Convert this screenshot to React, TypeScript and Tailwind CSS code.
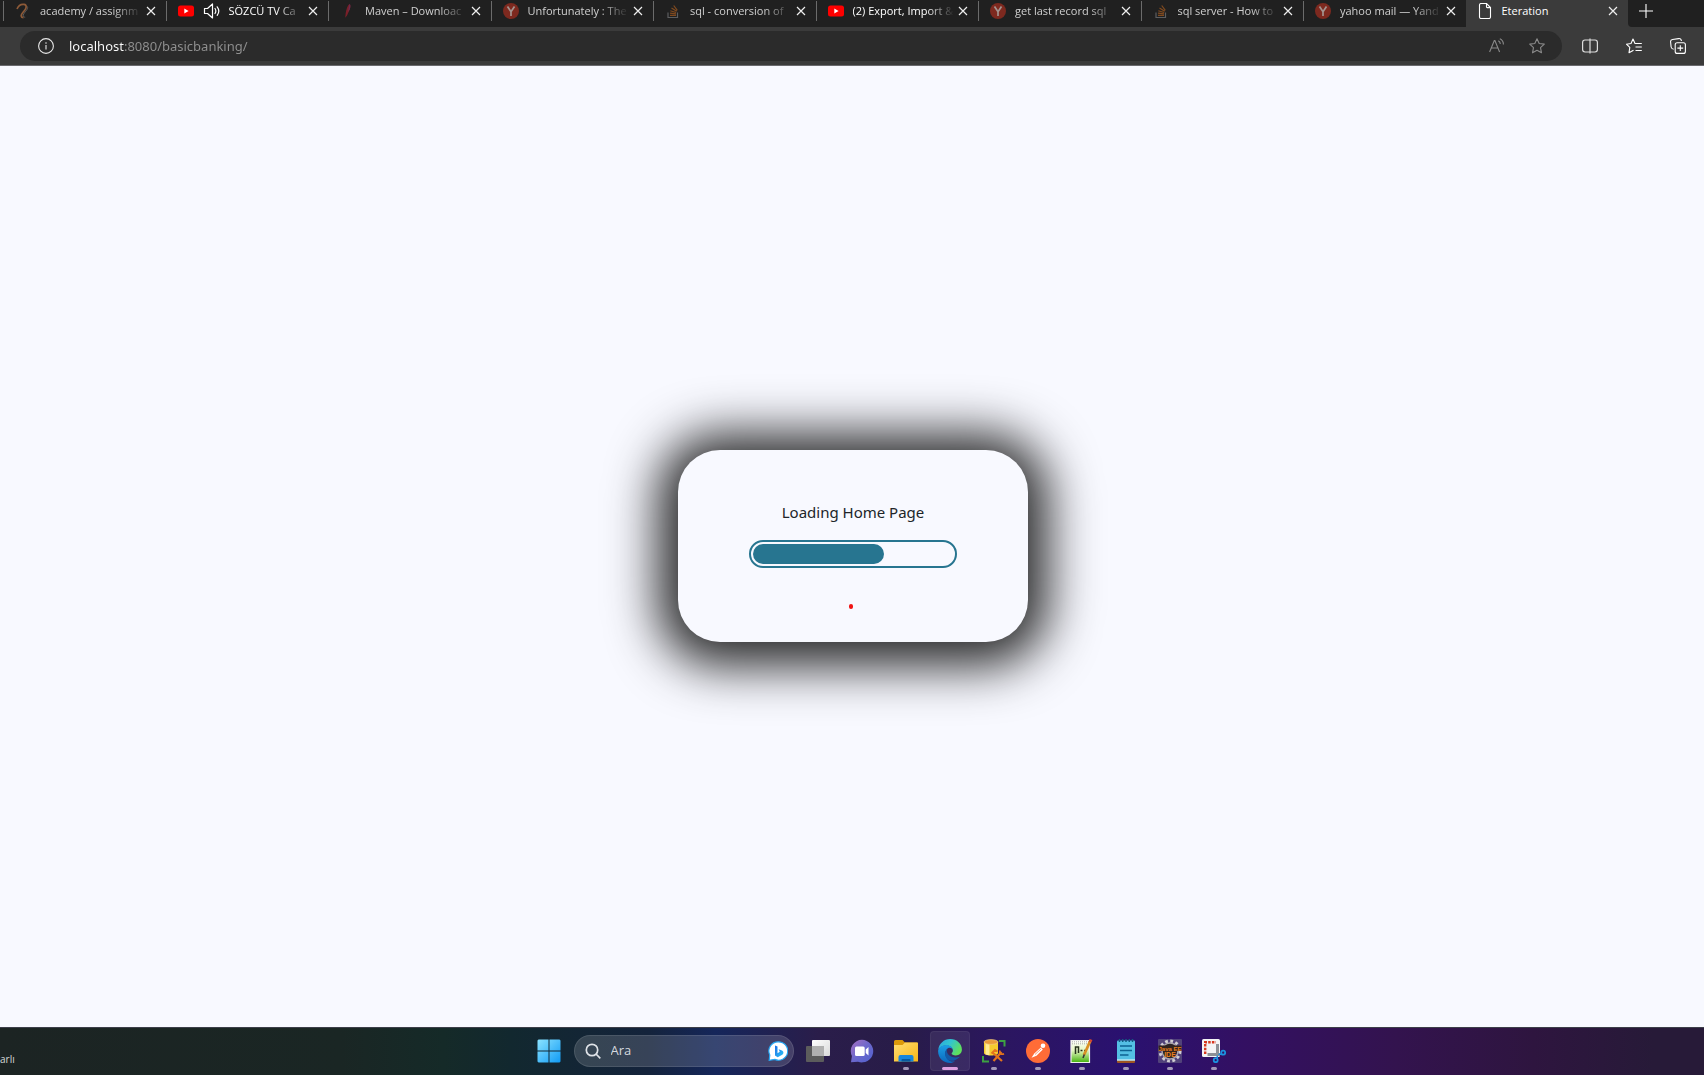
import React from 'react';

const UI = "font-['Open_Sans','Noto_Sans',sans-serif]";

/* ---------- tab favicons ---------- */

function AcademyIcon() {
  return (
    <svg viewBox="0 0 16 16" className="size-4 shrink-0" fill="none">
      <path d="M2 6C3.500 2.500 6.500 1 9 1.400c3 .5 2.700 3.600.5 6.100-1.800 2-3.500 3.800-3.300 5.500.2 1.200 1.200 1.700 2.300 1.700" stroke="#8d5a38" strokeWidth="1.700" />
      <path d="M12.500 3.500c1 3-3.200 5.500-4.300 8.500-.3 1.300.5 2.200 2 2.200" stroke="#5e5c5b" strokeWidth="1" />
    </svg>
  );
}

function YouTubeIcon() {
  return (
    <svg viewBox="0 0 16 16" className="size-4 shrink-0">
      <rect x="0" y="2.500" width="16" height="11" rx="2.500" fill="#f00" />
      <path d="M6.300 5.600v4.800L10.600 8z" fill="#fff" />
    </svg>
  );
}

function MavenIcon() {
  return (
    <svg viewBox="0 0 16 16" className="size-4 shrink-0">
      <path d="M9.500 1c1.300.8 1 3.200.2 5.500L7 12.500 5.200 14.800 5.600 11C6.200 6.500 7.300 2.500 9.500 1z" fill="#7a1f28" />
      <path d="M9.500 1c1.300.8 1 3.200.2 5.500L8 9z" fill="#6b2d52" />
    </svg>
  );
}

function YandexIcon() {
  return (
    <svg viewBox="0 0 16 16" className="size-4 shrink-0" fill="none">
      <circle cx="8" cy="8" r="8" fill="#7d291f" />
      <path d="M4.500 3.500 8 8.800l3.500-5.300M8 8.500V13" stroke="#a3938f" strokeWidth="1.700" />
    </svg>
  );
}

function StackIcon() {
  return (
    <svg viewBox="0 0 16 16" className="size-4 shrink-0" fill="none">
      <path d="M3 9.500v5h9.500v-5" stroke="#5d5e60" strokeWidth="1.200" />
      <path d="M5 12.300h6M5 10.200l6 .7M5.300 7.700l5.800 1.800M6.500 5l5.200 3.200M8.700 2.500l3.600 4.800" stroke="#804a1f" strokeWidth="1.200" />
    </svg>
  );
}

function PageIcon() {
  return (
    <svg viewBox="0 0 16 16" className="size-4 shrink-0" fill="none" stroke="#fff" strokeWidth="1.100">
      <path d="M2.500 2C2.500 1 3 .5 4 .5h5.500l4 4V14c0 1-.5 1.500-1.500 1.500H4c-1 0-1.500-.5-1.500-1.500z" />
      <path d="M9.500.5V4c0 .4.200.600.6.600h3.400" />
    </svg>
  );
}

function SpeakerIcon() {
  return (
    <svg viewBox="0 0 18 16" className="h-4 w-[18px] shrink-0" fill="none" stroke="#fff" strokeWidth="1.200" strokeLinejoin="round">
      <path d="M1.500 5.500h3L9.500 1v14l-5-4.500h-3z" />
      <path d="M12 5.500c1 1.500 1 3.500 0 5M14.200 3.800c1.900 2.500 1.900 6 0 8.500" strokeLinecap="round" />
    </svg>
  );
}

function CloseIcon() {
  return (
    <svg viewBox="0 0 10 10" className="size-[10px]" stroke="#eee" strokeWidth="1.200" fill="none">
      <path d="M1 1l8 8M9 1L1 9" />
    </svg>
  );
}

type TabInfo = { title: string; icon: React.ReactNode; sound?: boolean; bright?: boolean };

const tabs: TabInfo[] = [
  { title: 'academy / assignm', icon: <AcademyIcon /> },
  { title: 'SÖZCÜ TV Ca', icon: <YouTubeIcon />, sound: true, bright: true },
  { title: 'Maven – Downloac', icon: <MavenIcon /> },
  { title: 'Unfortunately : The', icon: <YandexIcon /> },
  { title: 'sql - conversion of', icon: <StackIcon /> },
  { title: '(2) Export, Import &', icon: <YouTubeIcon />, bright: true },
  { title: 'get last record sql', icon: <YandexIcon /> },
  { title: 'sql server - How to', icon: <StackIcon /> },
  { title: 'yahoo mail — Yand', icon: <YandexIcon /> },
];

function Tab({ title, icon, sound, bright }: TabInfo) {
  return (
    <div className="flex min-w-0 flex-1 items-center">
      <span className="h-5 w-px shrink-0 bg-[#6b6b6b]" />
      <div className="flex min-w-0 flex-1 items-center pl-[11px] pr-2">
        {icon}
        {sound && <span className="ml-[9px] flex"><SpeakerIcon /></span>}
        <span
          className={
            'min-w-0 flex-1 overflow-hidden whitespace-nowrap [mask-image:linear-gradient(to_left,transparent,black_28px)] ' +
            (sound ? 'ml-2 ' : 'ml-[9px] ') +
            (bright ? 'text-white' : 'text-[#d0d0d0]')
          }
        >
          {title}
        </span>
        <button aria-label={'Close ' + title} className="ml-[2px] flex size-[14px] shrink-0 items-center justify-center">
          <CloseIcon />
        </button>
      </div>
    </div>
  );
}

function TabStrip() {
  return (
    <div className="flex h-[27px] bg-[#202020] pl-[3px] text-[11px] leading-4">
      <div className="flex min-w-0 flex-[9] pb-[5px]">
        {tabs.map((t) => (
          <Tab key={t.title} {...t} />
        ))}
      </div>
      <div className="flex min-w-0 flex-1 bg-[#3b3b3b]">
        <span className="w-1 shrink-0 self-stretch rounded-br bg-[#202020] -ml-1" />
        <div className="flex min-w-0 flex-1 items-center pb-[5px] pl-[11px] pr-2">
          <PageIcon />
          <span className="ml-[9px] flex-1 text-white">Eteration</span>
          <button aria-label="Close Eteration" className="flex size-[14px] shrink-0 items-center justify-center">
            <CloseIcon />
          </button>
        </div>
      </div>
      <div className="flex w-[76px] shrink-0 bg-[#3b3b3b]">
        <div className="flex flex-1 items-center rounded-bl bg-[#202020] pb-[5px] pl-[11px]">
          <button aria-label="New tab">
            <svg viewBox="0 0 14 14" className="size-[14px]" stroke="#fff" strokeWidth="1.100">
              <path d="M7 0v14M0 7h14" />
            </svg>
          </button>
        </div>
      </div>
    </div>
  );
}

function Toolbar() {
  return (
    <div className="flex h-[39px] items-center border-b border-[#6a6a6e] bg-[#3b3b3b] pl-5 pr-[18px]">
      <div className="flex h-[30px] min-w-0 flex-1 items-center rounded-full bg-[#2b2b2b] pl-[18px] pr-[17px]">
        <button aria-label="Site information">
          <svg viewBox="0 0 16 16" className="size-4" fill="none" stroke="#e8e8e8" strokeWidth="1.100">
            <circle cx="8" cy="8" r="7.400" />
            <path d="M8 7v4.500M8 4.300v1.400" />
          </svg>
        </button>
        <input
          aria-label="Address"
          defaultValue="localhost:8080/basicbanking/"
          className="ml-[15px] min-w-0 flex-1 bg-[linear-gradient(to_right,#fff_56px,#919191_56px)] bg-clip-text font-['Noto_Sans',sans-serif] text-[13px] leading-5 text-transparent outline-none"
        />
        <button aria-label="Read aloud">
          <svg viewBox="0 0 16 16" className="size-4" fill="none" stroke="#8a8a8a" strokeWidth="1.100">
            <path d="M.6 14 5.300 2.500h.6L10.600 14M2.200 10h6.800" />
            <path d="M9.300 2.700c1.300.7 2 1.800 2 3.300M10.800.8c2.300 1 3.600 3 3.600 5.600" />
          </svg>
        </button>
        <button aria-label="Add to favorites" className="ml-6">
          <svg viewBox="0 0 16 16" className="size-4" fill="none" stroke="#8a8a8a" strokeWidth="1.100" strokeLinejoin="round">
            <path d="M8 .8l2.200 4.700 5.100.6-3.800 3.500 1 5.200L8 12.300l-4.500 2.500 1-5.200L.7 6.100l5.100-.6z" />
          </svg>
        </button>
      </div>
      <div className="ml-5 flex items-center gap-7">
        <button aria-label="Split screen">
          <svg viewBox="0 0 16 16" className="size-4" fill="none" stroke="#ddd" strokeWidth="1.200">
            <path d="M6.500 2H3C1.500 2 .6 2.900.6 4.400v7.200C.6 13.100 1.500 14 3 14h3.500M9.500 2H13c1.500 0 2.400.9 2.400 2.400v7.200c0 1.500-.9 2.400-2.400 2.400H9.500M6.500 2h3M6.500 14h3M8 .5v15" />
          </svg>
        </button>
        <button aria-label="Favorites">
          <svg viewBox="0 0 16 16" className="size-4" fill="none" stroke="#fff" strokeWidth="1.100" strokeLinejoin="round">
            <path d="M15.800 5.500H9L7 1 5 5.500.4 6.200 3.800 9.400 3 14.800l4.500-2.600M9.500 9h6.300M9.500 12.500h6.300" />
          </svg>
        </button>
        <button aria-label="Collections">
          <svg viewBox="0 0 16 16" className="size-4" fill="none" stroke="#fff" strokeWidth="1.100" strokeLinejoin="round">
            <path d="M3.700 11.200C1.800 11 1.300 10.200 1.100 9L.6 4C.4 2.600 1.200 1.700 2.500 1.500L8.600.6c1.500-.2 2.600.6 2.900 2.400" />
            <rect x="5.200" y="4.800" width="10.200" height="10.600" rx="2" fill="#3b3b3b" />
            <path d="M10.300 7.200v5.800M7.400 10.100h5.800" />
          </svg>
        </button>
      </div>
    </div>
  );
}

function LoadingCard() {
  const progress = 65.5;
  return (
    <section className="flex w-[350px] flex-col items-center rounded-[42px] bg-[#f8f9ff] pb-[33px] pt-[50px] shadow-[0_4px_50px_20px_rgba(0,0,0,0.84)]">
      <h1 className="font-['Noto_Sans',sans-serif] text-[15px] leading-6 text-[#212529]">Loading Home Page</h1>
      <div
        role="progressbar"
        aria-label="Loading Home Page"
        aria-valuenow={progress}
        className="mt-4 h-7 w-[208px] rounded-full border-2 border-[#277590] p-[2px]"
      >
        <div className="h-full rounded-full bg-[#277590]" style={{ width: `${progress}%` }} />
      </div>
      <span className="mr-1 mt-9 h-[5px] w-1 rounded-full bg-[#f01414]" />
    </section>
  );
}

/* ---------- taskbar icons ---------- */

function StartIcon() {
  return (
    <svg viewBox="0 0 24 24" className="size-6">
      <defs>
        <linearGradient id="win" x1="0" y1="0" x2="1" y2="1" gradientUnits="objectBoundingBox">
          <stop offset="0" stopColor="#8be3ff" />
          <stop offset="1" stopColor="#109bf5" />
        </linearGradient>
      </defs>
      <path d="M1.500.5H11.500V11.500H.5V1.500zM12.500.5H22.500L23.500 1.500V11.500H12.500zM.5 12.500H11.500V23.500H1.500L.5 22.500zM12.500 12.500H23.500V22.500L22.500 23.500H12.500z" fill="url(#win)" />
    </svg>
  );
}

function BingIcon() {
  return (
    <svg viewBox="0 0 20 20" className="size-5 shrink-0">
      <defs>
        <linearGradient id="bing" x1="0" y1="0" x2="1" y2="1">
          <stop offset="0" stopColor="#1b6fe8" />
          <stop offset="1" stopColor="#2cc3f4" />
        </linearGradient>
      </defs>
      <path d="M10.500.8a9.200 9.200 0 1 1-3.700 17.600L1.200 19.300 1.800 14A9.200 9.200 0 0 1 10.500.8z" fill="#fff" stroke="#25a5f2" strokeWidth="1.200" />
      <path d="M7 4.500l2.500.9v6.800l2.300-1.400-1.200-2.600 3.400 1.300c2 1 1.800 3.300.3 4.300L9.700 16.300 7 14.500z" fill="url(#bing)" />
    </svg>
  );
}

function TaskViewIcon() {
  return (
    <svg viewBox="0 0 24 24" className="size-6">
      <defs>
        <linearGradient id="tv" x1="0" y1="0" x2="1" y2="1">
          <stop offset="0" stopColor="#fff" />
          <stop offset="1" stopColor="#d9d9d9" />
        </linearGradient>
      </defs>
      <rect x="0" y="7" width="18" height="16" rx="1" fill="#5c5c5c" />
      <rect x="6" y="1" width="18" height="16" rx="1" fill="url(#tv)" />
      <path d="M6 7h12v10H6z" fill="#b0b0b0" />
    </svg>
  );
}

function ChatIcon() {
  return (
    <svg viewBox="0 0 24 24" className="size-6">
      <defs>
        <linearGradient id="chat" x1="0" y1="0" x2="1" y2="1">
          <stop offset="0" stopColor="#a66fc0" />
          <stop offset=".5" stopColor="#6c68cc" />
          <stop offset="1" stopColor="#4f60cf" />
        </linearGradient>
      </defs>
      <path d="M12 .8A11.300 11.300 0 1 1 8 22.700L1 23.200 1.900 17A11.300 11.300 0 0 1 12 .8z" fill="url(#chat)" />
      <rect x="5" y="7.500" width="9.700" height="9.500" rx="1.500" fill="#fff" />
      <path d="M15.700 10.500 18.500 8v8.500l-2.800-2.500z" fill="#fff" />
    </svg>
  );
}

function FolderIcon() {
  return (
    <svg viewBox="0 0 24 24" className="size-6">
      <defs>
        <linearGradient id="fold" x1="0" y1="0" x2="1" y2="1">
          <stop offset="0" stopColor="#ffde72" />
          <stop offset="1" stopColor="#f9b716" />
        </linearGradient>
      </defs>
      <path d="M0 2.500Q0 1 1.500 1H8.500L11 3.500H23Q24 3.500 24 4.500V10H0z" fill="#dc9a0a" />
      <path d="M0 6h8.500L11 3.500h12q1 0 1 1V22.500H0z" fill="url(#fold)" />
      <path d="M4.500 22.500V18Q4.500 16 6.500 16H17.500Q19.500 16 19.500 18V22.500z" fill="#1686dc" />
      <path d="M7.500 22.500V21Q7.500 20 8.500 20H15.500Q16.500 20 16.500 21V22.500z" fill="#075a9f" />
    </svg>
  );
}

function EdgeIcon() {
  return (
    <svg viewBox="0 0 24 24" className="size-6">
      <defs>
        <linearGradient id="e1" x1="0" y1="0" x2="1" y2=".5">
          <stop offset="0" stopColor="#2aa3e0" />
          <stop offset=".5" stopColor="#32c5cf" />
          <stop offset="1" stopColor="#5fe05c" />
        </linearGradient>
        <linearGradient id="e2" x1="0" y1="0" x2="0" y2="1">
          <stop offset="0" stopColor="#1c9fe5" />
          <stop offset="1" stopColor="#0c68bd" />
        </linearGradient>
      </defs>
      <path d="M.2 11C.9 4.800 5.900.1 12.100.1 19 .1 23.900 5 23.900 10.600c0 3.500-2.700 5.900-6.100 5.900-2.600 0-4.200-.8-4.200-1.900 0-.8 1.300-1.300 1.300-3.100C14.900 9 12.300 6.500 8.800 6.500 4.300 6.500 1.200 8.600.2 11z" fill="url(#e1)" />
      <path d="M.1 12.500c0-3.600 3.900-6.400 8.300-6.400 3.700 0 6.500 2.400 6.500 5.400 0-1.600-1.700-2.700-3.200-2.700-2.500 0-4.300 2.700-4.300 5.700 0 4.800 4 9 9.600 7.900-1.400.9-3.200 1.500-5 1.500C5.300 23.900.1 19 .1 12.500z" fill="url(#e2)" />
      <path d="M9.300 10c-2.500 1.400-3 5.500-1.300 8.400 2.500 4.300 8.200 4.800 12.800.4.800-.8 1.200-1.300.5-1.100-3.800 1.500-8.500.5-11-2.300-1.500-1.800-1.800-3.700-1-5.400z" fill="#135aa8" />
    </svg>
  );
}

function DatabaseToolsIcon() {
  return (
    <svg viewBox="0 0 24 24" className="size-6" fill="none">
      <path d="M2 3v11c0 1.500 3 2.500 7 2.500s7-1 7-2.500V3z" fill="#f5cb2e" />
      <path d="M3.500 4v11.300c1 .6 2.400.9 4 1V4z" fill="#ffec93" />
      <ellipse cx="9" cy="3" rx="7" ry="2.400" fill="#e99c3a" stroke="#f7d489" strokeWidth=".6" />
      <path d="M17 2h5.500v5.500M1 17v5.500h6" stroke="#3da142" strokeWidth="2" />
      <path d="M11.500 22l8-9M10.500 13.500 20 22" stroke="#e2731c" strokeWidth="2.200" />
      <path d="M9.500 14.500l3.500-3.500 2.500 1.500M18 11.500c-1 3 1.500 4.500 4 3.200" stroke="#e2731c" strokeWidth="1.800" />
    </svg>
  );
}

function PostmanIcon() {
  return (
    <svg viewBox="0 0 24 24" className="size-6" fill="none">
      <circle cx="12" cy="12" r="12" fill="#ff6c37" />
      <path d="M5.500 18.800l2.800-4.300 6.500-6 2 2-6.300 6.200z" fill="#fff" />
      <circle cx="17" cy="6.800" r="2.300" fill="#fff" />
      <path d="M9 15.500l6-5.500" stroke="#ff6c37" strokeWidth=".7" />
    </svg>
  );
}

function NotepadPlusIcon() {
  return (
    <svg viewBox="0 0 24 24" className="size-6" fill="none">
      <defs>
        <linearGradient id="npp" x1="0" y1="0" x2="0" y2="1">
          <stop offset="0" stopColor="#fff" />
          <stop offset=".45" stopColor="#e4f5c0" />
          <stop offset="1" stopColor="#43b30c" />
        </linearGradient>
      </defs>
      <path d="M1 1.500h18.500v22H1z" fill="url(#npp)" stroke="#eee" strokeWidth="1.200" />
      <path d="M2 2.800h17M2 4.800h17" stroke="#999" strokeWidth=".8" strokeDasharray="1 1" />
      <path d="M5.500 15V8h3v6M10.500 11.500h2M14 11.500h2" stroke="#26331c" strokeWidth="1.500" />
      <path d="M20 2.500 14 16" stroke="#d99025" strokeWidth="2.800" />
      <path d="M21 .5 20 3" stroke="#d34a32" strokeWidth="3" />
      <path d="M14.300 15.500 13 19" stroke="#333" strokeWidth="1.500" />
    </svg>
  );
}

function NotepadIcon() {
  return (
    <svg viewBox="0 0 24 24" className="size-6" fill="none">
      <rect x="3" y="20" width="18" height="4" rx="1" fill="#9f5522" />
      <path d="M3 2.500Q3 1.500 4 1.500H20Q21 1.500 21 2.500V21.500H3z" fill="#54bfe4" />
      <path d="M3 21h18" stroke="#eefaff" />
      <path d="M5.500 0v3M8.700 0v3M12 0v3M15.300 0v3M18.500 0v3" stroke="#135c83" strokeWidth="1.500" />
      <path d="M6 7h12M6 11.500h12M6 16h8.500" stroke="#0d6291" strokeWidth="1.600" />
    </svg>
  );
}

function EclipseIcon() {
  return (
    <svg viewBox="0 0 24 24" className="size-6" fill="none">
      <rect width="24" height="24" rx="1" fill="#51427a" />
      <circle cx="12" cy="12" r="10" stroke="#d0cdd3" strokeWidth="3" strokeDasharray="2.800 2.435" />
      <circle cx="12" cy="12" r="8" fill="#282329" stroke="#aba5ae" strokeWidth="1.500" />
      <path d="M.5 6.500h23V12H.5zM7 12h10v6H7z" fill="#33231c" />
      <text x="12" y="11.500" textAnchor="middle" fill="#e98021" fontSize="6" fontWeight="700" fontFamily="Liberation Sans">Java EE</text>
      <text x="12" y="17.500" textAnchor="middle" fill="#e98021" fontSize="7" fontWeight="700" fontFamily="Liberation Sans">IDE</text>
    </svg>
  );
}

function SnipIcon() {
  return (
    <svg viewBox="0 0 24 24" className="size-6" fill="none">
      <rect x="0" y="0" width="18" height="18" rx="1.500" fill="#f4f4f5" />
      <path d="M3.200 15V3.200H14" stroke="#d8381f" strokeWidth="2.400" strokeDasharray="2.500 1.200" />
      <path d="M15.500 5v12M5.500 15.500H18" stroke="#8d9196" strokeWidth="3" />
      <circle cx="13.700" cy="21.200" r="2" stroke="#1b92df" strokeWidth="1.800" />
      <circle cx="21.200" cy="13.700" r="2" stroke="#1b92df" strokeWidth="1.800" />
      <path d="M15.300 19.500v-3M19.500 15.300h-3" stroke="#1b92df" strokeWidth="1.500" />
    </svg>
  );
}

type AppInfo = { name: string; icon: React.ReactNode; running?: boolean; active?: boolean };

const apps: AppInfo[] = [
  { name: 'Task view', icon: <TaskViewIcon /> },
  { name: 'Chat', icon: <ChatIcon /> },
  { name: 'File Explorer', icon: <FolderIcon />, running: true },
  { name: 'Microsoft Edge', icon: <EdgeIcon />, running: true, active: true },
  { name: 'Database tools', icon: <DatabaseToolsIcon />, running: true },
  { name: 'Postman', icon: <PostmanIcon />, running: true },
  { name: 'Notepad++', icon: <NotepadPlusIcon />, running: true },
  { name: 'Notepad', icon: <NotepadIcon />, running: true },
  { name: 'Eclipse', icon: <EclipseIcon />, running: true },
  { name: 'Snipping Tool', icon: <SnipIcon />, running: true },
];

function AppButton({ name, icon, running, active }: AppInfo) {
  return (
    <button
      aria-label={name}
      className={
        'relative flex size-10 shrink-0 items-center justify-center rounded ' +
        (active ? 'bg-white/8 ring-1 ring-inset ring-white/5' : '')
      }
    >
      {icon}
      {running && (
        <span
          className={
            'absolute bottom-px left-1/2 h-[3px] -translate-x-1/2 rounded-full ' +
            (active ? 'w-4 bg-[#dda0e0]' : 'w-[6px] bg-[#a197b8]')
          }
        />
      )}
    </button>
  );
}

function Taskbar() {
  return (
    <footer className="relative flex h-12 items-center justify-center overflow-hidden border-t border-[#3d3f49] bg-[linear-gradient(to_right,#1c2423_0%,#1a2624_20%,#152a28_26%,#12282f_30%,#14233b_38%,#15265a_42%,#2a1d4a_48%,#281c48_53%,#2b1660_59%,#2a1170_66%,#331062_73%,#33134e_82%,#2e153f_90%,#271a38_97%)] pb-px pl-[58px]">
      <span className="absolute left-0 top-[23px] text-[10px] leading-4 text-[#d5d8d8]">arlı</span>
      <button aria-label="Start" className="flex size-10 shrink-0 items-center justify-center">
        <StartIcon />
      </button>
      <label className="ml-[5px] mr-1 flex h-8 w-[220px] shrink-0 items-center rounded-full border border-white/10 bg-white/15 pl-[10px] pr-[5px]">
        <svg viewBox="0 0 16 16" className="size-4 shrink-0" fill="none" stroke="#dfe3e8" strokeWidth="1.700">
          <circle cx="7" cy="7" r="5.700" />
          <path d="M11 11l4.300 4.300" />
        </svg>
        <input aria-label="Ara" placeholder="Ara" className="ml-[10px] min-w-0 flex-1 bg-transparent text-[13px] text-white outline-none placeholder:text-[#d5d9df]" />
        <BingIcon />
      </label>
      <div className="flex gap-1">
        {apps.map((a) => (
          <AppButton key={a.name} {...a} />
        ))}
      </div>
    </footer>
  );
}

export default function App() {
  return (
    <div className={'flex min-h-screen flex-col overflow-hidden bg-[#f8f9ff] ' + UI}>
      <header>
        <TabStrip />
        <Toolbar />
      </header>
      <main className="flex flex-1 items-center justify-center pb-px pl-[2px]">
        <LoadingCard />
      </main>
      <Taskbar />
    </div>
  );
}
